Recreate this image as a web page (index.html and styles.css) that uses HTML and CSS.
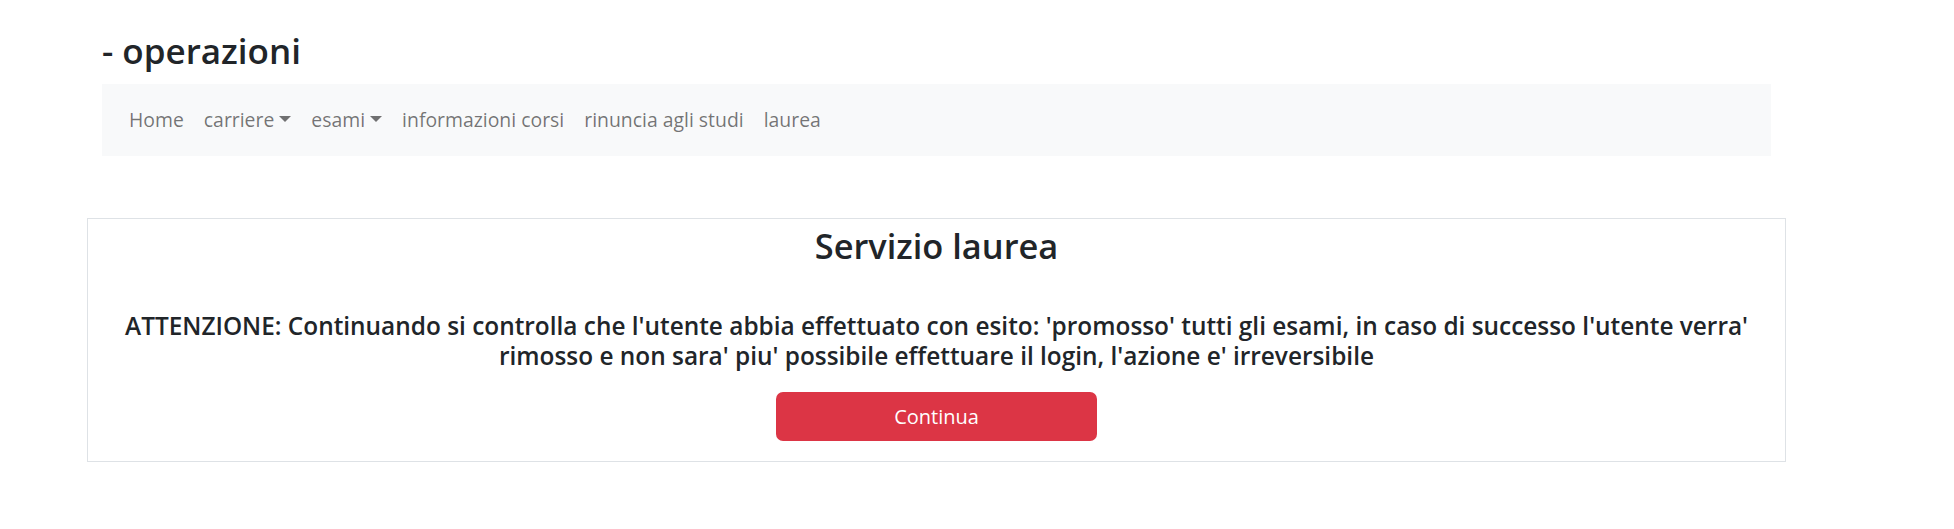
FILE: index.html
```html
<!DOCTYPE html>
<html lang="it">
<head>
<meta charset="utf-8">
<title>operazioni</title>
<link rel="stylesheet" href="styles.css">
</head>
<body>
<header class="top">
  <h3 class="page-title">- operazioni</h3>
  <nav class="navbar">
    <a class="nav-link" href="#">Home</a>
    <a class="nav-link dropdown" href="#">carriere</a>
    <a class="nav-link dropdown" href="#">esami</a>
    <a class="nav-link" href="#">informazioni corsi</a>
    <a class="nav-link" href="#">rinuncia agli studi</a>
    <a class="nav-link" href="#">laurea</a>
  </nav>
</header>
<main class="card">
  <h3 class="card-title">Servizio laurea</h3>
  <h5 class="card-text">ATTENZIONE: Continuando si controlla che l'utente abbia effettuato con esito: 'promosso' tutti gli esami, in caso di successo l'utente verra' rimosso e non sara' piu' possibile effettuare il login, l'azione e' irreversibile</h5>
  <button class="btn-danger" type="button">Continua</button>
</main>
</body>
</html>
```
FILE: styles.css
```css
* { box-sizing: border-box; }
body {
  margin: 0;
  font-family: "Open Sans", "Noto Sans", sans-serif;
  color: #212529;
  background: #fff;
}
.top {
  padding: 0 183px 0 102px;
}
.page-title {
  margin: 30px 0 12px;
  font-size: 35px;
  line-height: 42px;
  font-weight: 600;
}
.navbar {
  height: 72px;
  background: #f8f9fa;
  display: flex;
  align-items: center;
  padding: 0 0 0 17px;
}
.nav-link {
  padding: 0 10px;
  font-size: 19.4px;
  line-height: 30px;
  color: rgba(0, 0, 0, 0.55);
  text-decoration: none;
}
.dropdown::after {
  content: "";
  display: inline-block;
  margin-left: 5px;
  vertical-align: 5px;
  border-top: 6px solid;
  border-left: 6px solid transparent;
  border-right: 6px solid transparent;
}
.card {
  margin: 62px 168px 0 87px;
  border: 1px solid #dee2e6;
  padding: 6px 20px 20px;
  display: flex;
  flex-direction: column;
  align-items: center;
  text-align: center;
}
.card-title {
  margin: 0 0 44px;
  font-size: 34.4px;
  line-height: 42px;
  font-weight: 600;
}
.card-text {
  margin: 0 0 21px;
  font-size: 24.4px;
  line-height: 30px;
  font-weight: 600;
}
.btn-danger {
  width: 321px;
  height: 49px;
  border: 0;
  border-radius: 7px;
  background: #dc3545;
  color: #fff;
  font-family: inherit;
  font-size: 20px;
}
```
